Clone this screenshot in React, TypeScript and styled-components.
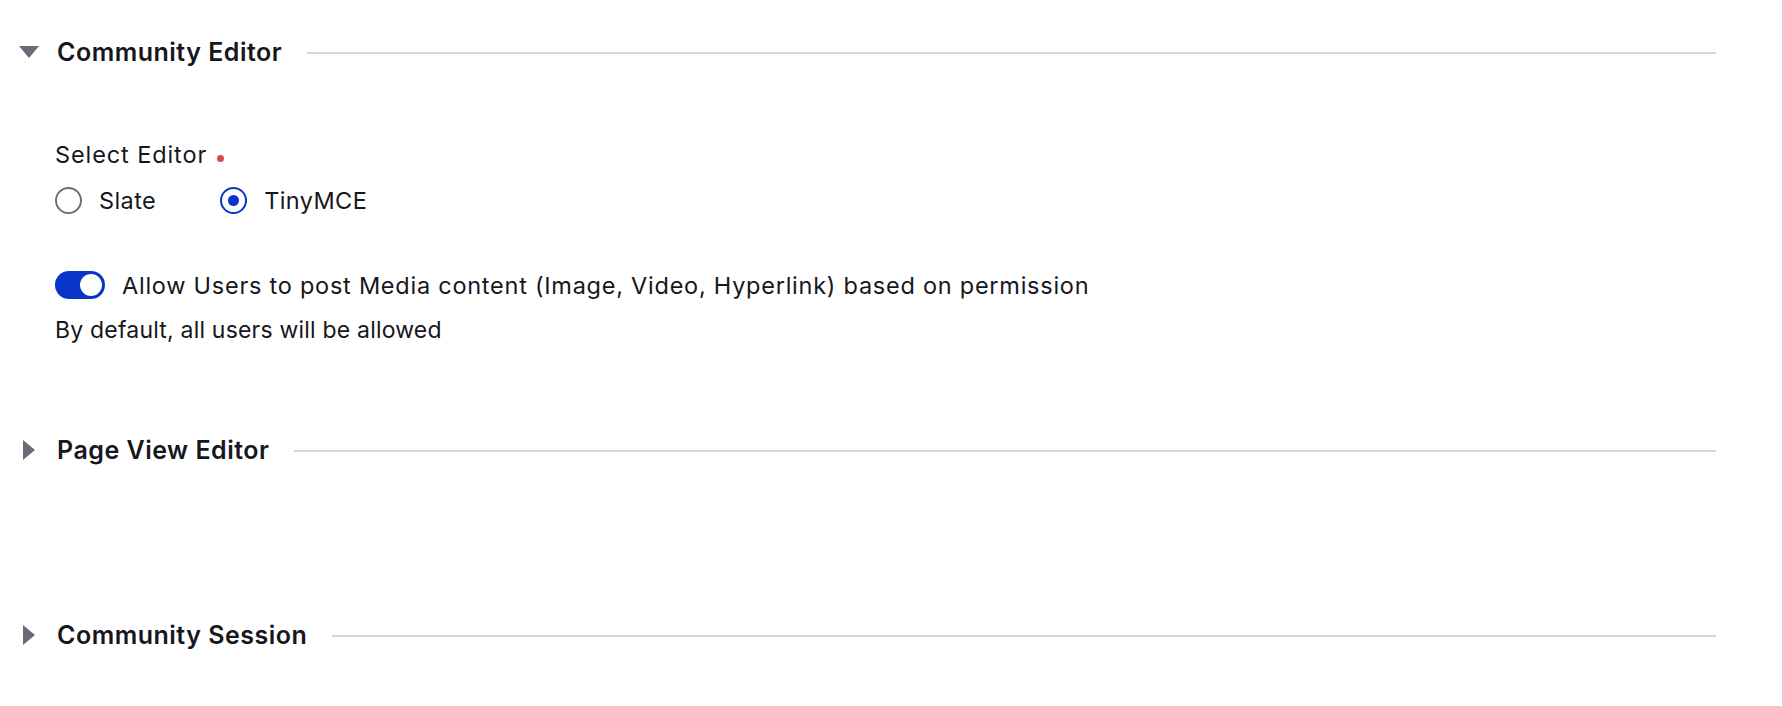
import { createGlobalStyle } from 'styled-components';
import styled from 'styled-components';

const GlobalStyle = createGlobalStyle`
  html, body {
    margin: 0;
    padding: 0;
    background: #ffffff;
  }
  body {
    font-family: Inter, "Noto Sans", "Liberation Sans", sans-serif;
    color: #16161d;
    -webkit-font-smoothing: antialiased;
  }
`;

const Page = styled.div`
  padding: 32px 66px 0 19px;
  display: flex;
  flex-direction: column;
`;

const Section = styled.section<{ $gap: number }>`
  display: flex;
  flex-direction: column;
  padding-bottom: ${(p) => p.$gap}px;
`;

const Header = styled.div`
  display: flex;
  align-items: center;
  height: 40px;
  gap: 18px;
`;

const Caret = styled.span`
  width: 20px;
  height: 20px;
  display: flex;
  align-items: center;
  justify-content: center;
  flex-shrink: 0;
`;

const Title = styled.h2`
  margin: 0;
  font-size: 25px;
  font-weight: 600;
  letter-spacing: 0.5px;
  white-space: nowrap;
  color: #16161d;
`;

const Rule = styled.div`
  flex: 1;
  height: 2px;
  background: #d5d5db;
  margin-left: 7px;
  margin-top: 2px;
`;

const Body = styled.div`
  display: flex;
  flex-direction: column;
  padding: 70px 0 0 36px;
`;

const FieldLabel = styled.div`
  font-size: 23.5px;
  letter-spacing: 0.9px;
  line-height: 26px;
  display: flex;
  align-items: center;
  gap: 10px;
`;

const RequiredDot = styled.span`
  width: 7px;
  height: 7px;
  border-radius: 50%;
  background: #d9474b;
  margin-top: 6px;
`;

const RadioRow = styled.div`
  display: flex;
  align-items: center;
  gap: 64px;
  margin-top: 18px;
  height: 28px;
`;

const RadioOption = styled.label`
  display: flex;
  align-items: center;
  gap: 17px;
  font-size: 23.5px;
  letter-spacing: 0.4px;
  cursor: pointer;
`;

const RadioCircle = styled.span<{ $checked: boolean }>`
  width: 27px;
  height: 27px;
  box-sizing: border-box;
  border-radius: 50%;
  border: 2.5px solid ${(p) => (p.$checked ? '#0a33c9' : '#6e6e78')};
  display: flex;
  align-items: center;
  justify-content: center;

  &::after {
    content: '';
    width: 11px;
    height: 11px;
    border-radius: 50%;
    background: #0a33c9;
    display: ${(p) => (p.$checked ? 'block' : 'none')};
  }
`;

const ToggleRow = styled.div`
  display: flex;
  align-items: center;
  gap: 17px;
  margin-top: 57px;
  height: 28px;
  font-size: 23.5px;
  letter-spacing: 0.75px;
`;

const Switch = styled.span<{ $on: boolean }>`
  width: 50px;
  height: 28px;
  box-sizing: border-box;
  border-radius: 14px;
  background: ${(p) => (p.$on ? '#0a33c9' : '#c4c4cc')};
  display: flex;
  align-items: center;
  justify-content: ${(p) => (p.$on ? 'flex-end' : 'flex-start')};
  padding: 0 3px;
  flex-shrink: 0;

  &::after {
    content: '';
    width: 22px;
    height: 22px;
    border-radius: 50%;
    background: #ffffff;
  }
`;

const HelpText = styled.div`
  font-size: 23px;
  letter-spacing: 0.2px;
  line-height: 26px;
  margin-top: 18px;
`;

function CaretIcon({ open }: { open: boolean }) {
  return (
    <svg width="20" height="20" viewBox="0 0 20 20">
      {open ? (
        <path d="M0 4 L20 4 L10 16 Z" fill="#6b6b78" />
      ) : (
        <path d="M4 0 L16 10 L4 20 Z" fill="#6b6b78" />
      )}
    </svg>
  );
}

export default function App() {
  return (
    <>
      <GlobalStyle />
      <Page>
        <Section $gap={87}>
          <Header>
            <Caret>
              <CaretIcon open />
            </Caret>
            <Title>Community Editor</Title>
            <Rule />
          </Header>
          <Body>
            <FieldLabel>
              Select Editor
              <RequiredDot />
            </FieldLabel>
            <RadioRow>
              <RadioOption>
                <RadioCircle $checked={false} />
                Slate
              </RadioOption>
              <RadioOption>
                <RadioCircle $checked />
                TinyMCE
              </RadioOption>
            </RadioRow>
            <ToggleRow>
              <Switch $on />
              Allow Users to post Media content (Image, Video, Hyperlink) based on permission
            </ToggleRow>
            <HelpText>By default, all users will be allowed</HelpText>
          </Body>
        </Section>
        <Section $gap={145}>
          <Header>
            <Caret>
              <CaretIcon open={false} />
            </Caret>
            <Title>Page View Editor</Title>
            <Rule />
          </Header>
        </Section>
        <Section $gap={52}>
          <Header>
            <Caret>
              <CaretIcon open={false} />
            </Caret>
            <Title>Community Session</Title>
            <Rule />
          </Header>
        </Section>
      </Page>
    </>
  );
}
